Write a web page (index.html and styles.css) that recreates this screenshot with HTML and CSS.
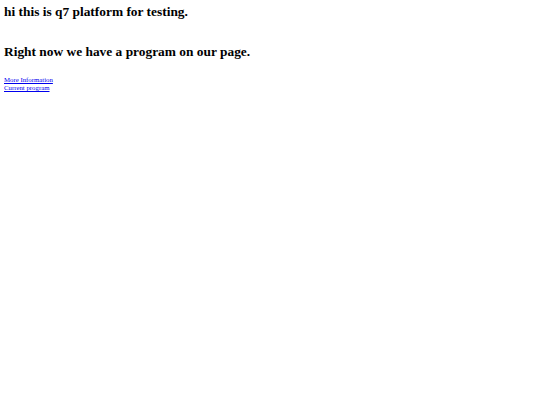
FILE: index.html
```html
<!DOCTYPE html>
<html>
<head>
<meta charset="utf-8">
<link rel="stylesheet" href="styles.css">
</head>
<body>
<h1 class="title">hi this is q7 platform for testing.</h1>
<h1 class="title second">Right now we have a program on our page.</h1>
<nav class="links">
<a href="#">More Information</a>
<a href="#">Current program</a>
</nav>
</body>
</html>
```
FILE: styles.css
```css
html, body {
  background: #ffffff;
}
body {
  margin: 0;
  padding: 3px 4px;
  font-family: "Liberation Serif", "Times New Roman", serif;
  color: #000;
}
.title {
  font-size: 13.4px;
  font-weight: bold;
  line-height: 17px;
  margin: 0;
}
.second {
  margin-top: 23px;
}
.links {
  display: flex;
  flex-direction: column;
  align-items: flex-start;
  margin-top: 16px;
  font-size: 6.8px;
  line-height: 8px;
}
.links a {
  color: #0000ee;
  text-decoration: underline;
}
```
